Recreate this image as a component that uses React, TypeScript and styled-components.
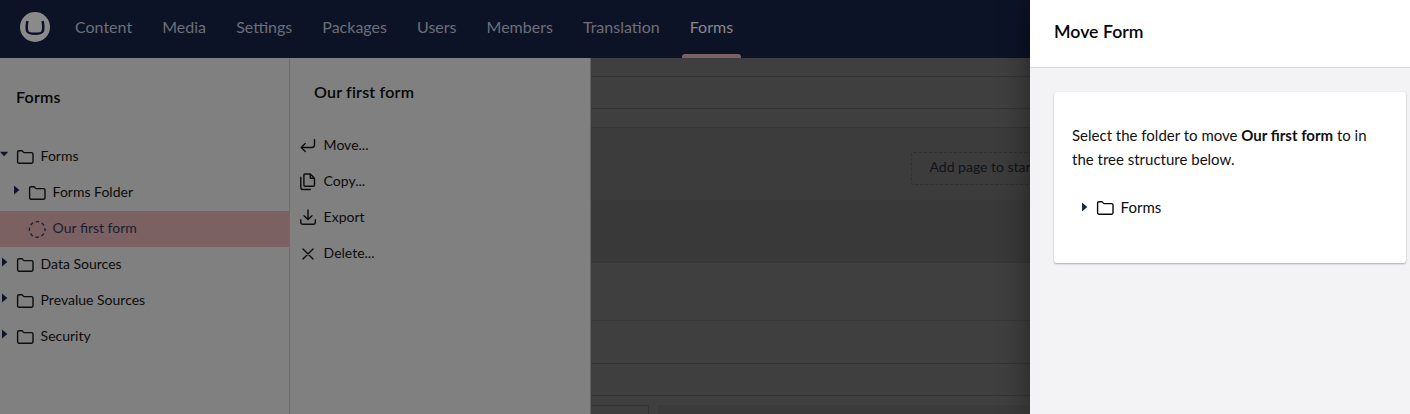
import React from "react";
import styled, { createGlobalStyle } from "styled-components";

const GlobalStyle = createGlobalStyle`
  * { box-sizing: border-box; }
  body {
    margin: 0;
    font-family: Lato, "Liberation Sans", sans-serif;
    font-size: 15px;
    line-height: 20px;
    overflow: hidden;
  }
`;

const Shell = styled.div`
  width: 1410px;
  height: 414px;
  display: flex;
  flex-direction: column;
  position: relative;
  overflow: hidden;
  background: #808080;
`;

const TopBar = styled.header`
  height: 58px;
  flex: none;
  display: flex;
  align-items: center;
  padding-left: 20px;
  background: #0d1327;
`;

const Logo = styled.svg`
  display: block;
  width: 30px;
  height: 30px;
  margin: 0 17px 4px 0;
`;

const Nav = styled.nav`
  display: flex;
  height: 100%;
  gap: 14.1px;
`;

const NavItem = styled.a<{ $active?: boolean }>`
  display: flex;
  flex-direction: column;
  justify-content: space-between;
  padding: 16px 8px 0;
  font-size: 16px;
  line-height: 22px;
  color: ${(p) => (p.$active ? "#86898f" : "#6c6f78")};

  &::after {
    content: "";
    height: 4px;
    margin: 0 -8px;
    border-radius: 3px 3px 0 0;
    background: ${(p) => (p.$active ? "#7a6163" : "transparent")};
  }
`;

const Body = styled.div`
  flex: 1;
  display: flex;
  min-height: 0;
`;

const Sidebar = styled.aside`
  width: 290px;
  flex: none;
  border-right: 1px solid #6c6c6c;
  padding-top: 28px;
`;

const ActionPanel = styled.aside`
  width: 301px;
  flex: none;
  border-right: 1px solid #606060;
  padding-top: 23px;
`;

const Heading = styled.h2<{ $indent: number; $gap: number }>`
  margin: 0 0 ${(p) => p.$gap}px;
  padding-left: ${(p) => p.$indent}px;
  font-size: 16px;
  font-weight: 600;
  letter-spacing: 0.2px;
  font-variant-ligatures: common-ligatures;
  line-height: 22px;
  color: #060606;
`;

const TreeRow = styled.div<{ $level?: number; $selected?: boolean; $size?: number }>`
  display: flex;
  align-items: center;
  height: 36px;
  padding: 0 0 2px ${(p) => (p.$level ?? 0) * 12}px;
  font-size: ${(p) => p.$size ?? 14}px;
  color: ${(p) => (p.$selected ? "#1a1e33" : "#0c0c0c")};
  background: ${(p) => (p.$selected ? "#7c6162" : "transparent")};
`;

const Caret = styled.svg`
  display: block;
  flex: none;
  width: 9px;
  height: 10px;
  margin: 0 7px 4px 0;
  fill: #0e142c;
`;

const ModalCaret = styled(Caret)`
  margin-bottom: 1px;
  fill: #1b264f;
`;

const RowIcon = styled.svg`
  display: block;
  flex: none;
  width: 18px;
  height: 18px;
  margin: 2px 6.6px 0 0;
  fill: none;
  stroke: currentColor;
  stroke-width: 1.4;
  stroke-linecap: round;
  stroke-linejoin: round;
`;

const TreeIcon = styled(RowIcon)`
  margin-top: 4px;
`;

const MenuRow = styled.div`
  display: flex;
  align-items: center;
  height: 36px;
  padding-left: 9px;
  font-size: 14px;
  color: #0c0c0c;
`;

const Editor = styled.main`
  flex: 1;
  display: flex;
  flex-direction: column;
  background: #3f3f3f;
`;

const Band = styled.div<{ $h: number; $bg?: string; $line?: string }>`
  height: ${(p) => p.$h}px;
  flex: none;
  background: ${(p) => p.$bg ?? "transparent"};
  border-bottom: 1px solid ${(p) => p.$line ?? "#353535"};
`;

const PageBand = styled(Band)`
  padding: 24px 0 0 320px;
`;

const AddPage = styled.div`
  width: 180px;
  height: 33px;
  padding: 4px 17.5px;
  border: 1px dashed #303030;
  border-radius: 3px;
  font-size: 14px;
  color: #11131a;
  white-space: nowrap;
`;

const FieldRow = styled.div`
  flex: 1;
  display: flex;
  gap: 9px;
  padding-top: 9px;
`;

const FieldBox = styled.div`
  width: 58px;
  border: 1px solid #343434;
  border-width: 1px 1px 0 0;
`;

const FieldFill = styled.div`
  flex: 1;
  background: #3b3b3b;
`;

const Drawer = styled.section`
  position: absolute;
  inset: 0 0 0 auto;
  width: 380px;
  display: flex;
  flex-direction: column;
  background: #f3f3f5;
  box-shadow: 0 0 30px rgba(0, 0, 0, 0.45);
`;

const DrawerHeader = styled.header`
  height: 68px;
  flex: none;
  padding: 20px 24px;
  background: #fff;
  border-bottom: 1px solid #d8d7d9;
`;

const DrawerTitle = styled.h1`
  margin: 0;
  font-size: 17.7px;
  font-weight: 600;
  line-height: 24px;
  color: #060606;
`;

const Card = styled.div`
  width: 352px;
  height: 171px;
  margin: 24px 0 0 24px;
  padding: 31px 18px 0;
  border-radius: 3px;
  background: #fff;
  box-shadow: 0 1px 2px rgba(0, 0, 0, 0.3);
`;

const Message = styled.p`
  margin: 0 0 19px;
  line-height: 24px;
  color: #111;
`;

const CardTree = styled.div`
  padding-left: 8px;
`;

const FolderIcon = () => (
  <TreeIcon viewBox="0 0 18 18">
    <path d="M1.6 13.1V3.1Q1.6 1.7 3 1.7H5.7Q6.4 1.7 6.8 2.3L7.4 3.1Q7.8 3.6 8.5 3.6H15.6Q17 3.6 17 5V13.1Q17 14.2 15.7 14.2H2.9Q1.6 14.2 1.6 13.1Z" />
  </TreeIcon>
);

const FormIcon = () => (
  <TreeIcon viewBox="0 0 18 18">
    <circle cx="9.2" cy="8.4" r="7.8" strokeDasharray="3.3 2.826" strokeDashoffset="1.65" strokeLinecap="butt" />
  </TreeIcon>
);

const RIGHT = "M2 0.5L7.3 5L2 9.5Z";
const DOWN = "M0 2.7H8.3L4.1 7.3Z";

const tree = [
  { label: "Forms", level: 0, caret: DOWN },
  { label: "Forms Folder", level: 1, caret: RIGHT },
  { label: "Our first form", level: 1, selected: true },
  { label: "Data Sources", level: 0, caret: RIGHT },
  { label: "Prevalue Sources", level: 0, caret: RIGHT },
  { label: "Security", level: 0, caret: RIGHT },
];

const actions = [
  { label: "Move...", d: "M15.5 2.5V7.8Q15.5 10.5 12.8 10.5H2.5M6.2 6.5L2.2 10.5L6.2 14.5" },
  {
    label: "Copy...",
    d: "M6 1H11.3L15.5 5.2V12Q15.5 13.3 14.2 13.3H6.2Q4.9 13.3 4.9 12V2.2Q4.9 1 6 1ZM11.3 1V5.2H15.5M1.8 4.3V14.4Q1.8 16.5 3.8 16.5H11.3",
  },
  { label: "Export", d: "M9 1V10.3M5 6.8L9 10.6L13 6.8M1.8 10.7V13.6Q1.8 15.3 3.5 15.3H14.7Q16.3 15.3 16.3 13.6V10.7" },
  { label: "Delete...", d: "M4 4L14 14M14 4L4 14" },
];

const sections = ["Content", "Media", "Settings", "Packages", "Users", "Members", "Translation", "Forms"];

export default function App() {
  return (
    <Shell>
      <GlobalStyle />
      <TopBar>
        <Logo viewBox="0 0 30 30">
          <circle cx="15" cy="15" r="15" fill="#8a8a8a" />
          <path
            d="M7.4 9C6.6 13 6.6 17.3 7.3 19.4C8.2 21.6 10.8 21.7 15 21.7S21.8 21.6 22.7 19.4C23.4 17.3 23.4 13 22.6 9"
            fill="none"
            stroke="#0d1327"
            strokeWidth="2.5"
          />
        </Logo>
        <Nav>
          {sections.map((s) => (
            <NavItem key={s} $active={s === "Forms"}>
              {s}
            </NavItem>
          ))}
        </Nav>
      </TopBar>
      <Body>
        <Sidebar>
          <Heading $indent={16} $gap={31}>Forms</Heading>
          {tree.map((n) => (
            <TreeRow key={n.label} $level={n.level} $selected={n.selected}>
              <Caret viewBox="0 0 9 10">{n.caret && <path d={n.caret} />}</Caret>
              {n.selected ? <FormIcon /> : <FolderIcon />}
              {n.label}
            </TreeRow>
          ))}
        </Sidebar>
        <ActionPanel>
          <Heading $indent={24} $gap={24}>Our first form</Heading>
          {actions.map((a) => (
            <MenuRow key={a.label}>
              <RowIcon viewBox="0 0 18 18">
                <path d={a.d} />
              </RowIcon>
              {a.label}
            </MenuRow>
          ))}
        </ActionPanel>
        <Editor>
          <Band $h={19} />
          <Band $h={32} />
          <Band $h={19} />
          <PageBand $h={73} $bg="#3c3c3c" $line="#3a3a3a">
            <AddPage>Add page to start of form</AddPage>
          </PageBand>
          <Band $h={62} $bg="#393939" />
          <Band $h={58} $line="#393939" />
          <Band $h={43} />
          <Band $h={32} />
          <FieldRow>
            <FieldBox />
            <FieldFill />
          </FieldRow>
        </Editor>
      </Body>
      <Drawer>
        <DrawerHeader>
          <DrawerTitle>Move Form</DrawerTitle>
        </DrawerHeader>
        <Card>
          <Message>
            Select the folder to move <b>Our first form</b> to in the tree structure below.
          </Message>
          <CardTree>
            <TreeRow $size={15}>
              <ModalCaret viewBox="0 0 9 10">
                <path d={RIGHT} />
              </ModalCaret>
              <FolderIcon />
              Forms
            </TreeRow>
          </CardTree>
        </Card>
      </Drawer>
    </Shell>
  );
}
